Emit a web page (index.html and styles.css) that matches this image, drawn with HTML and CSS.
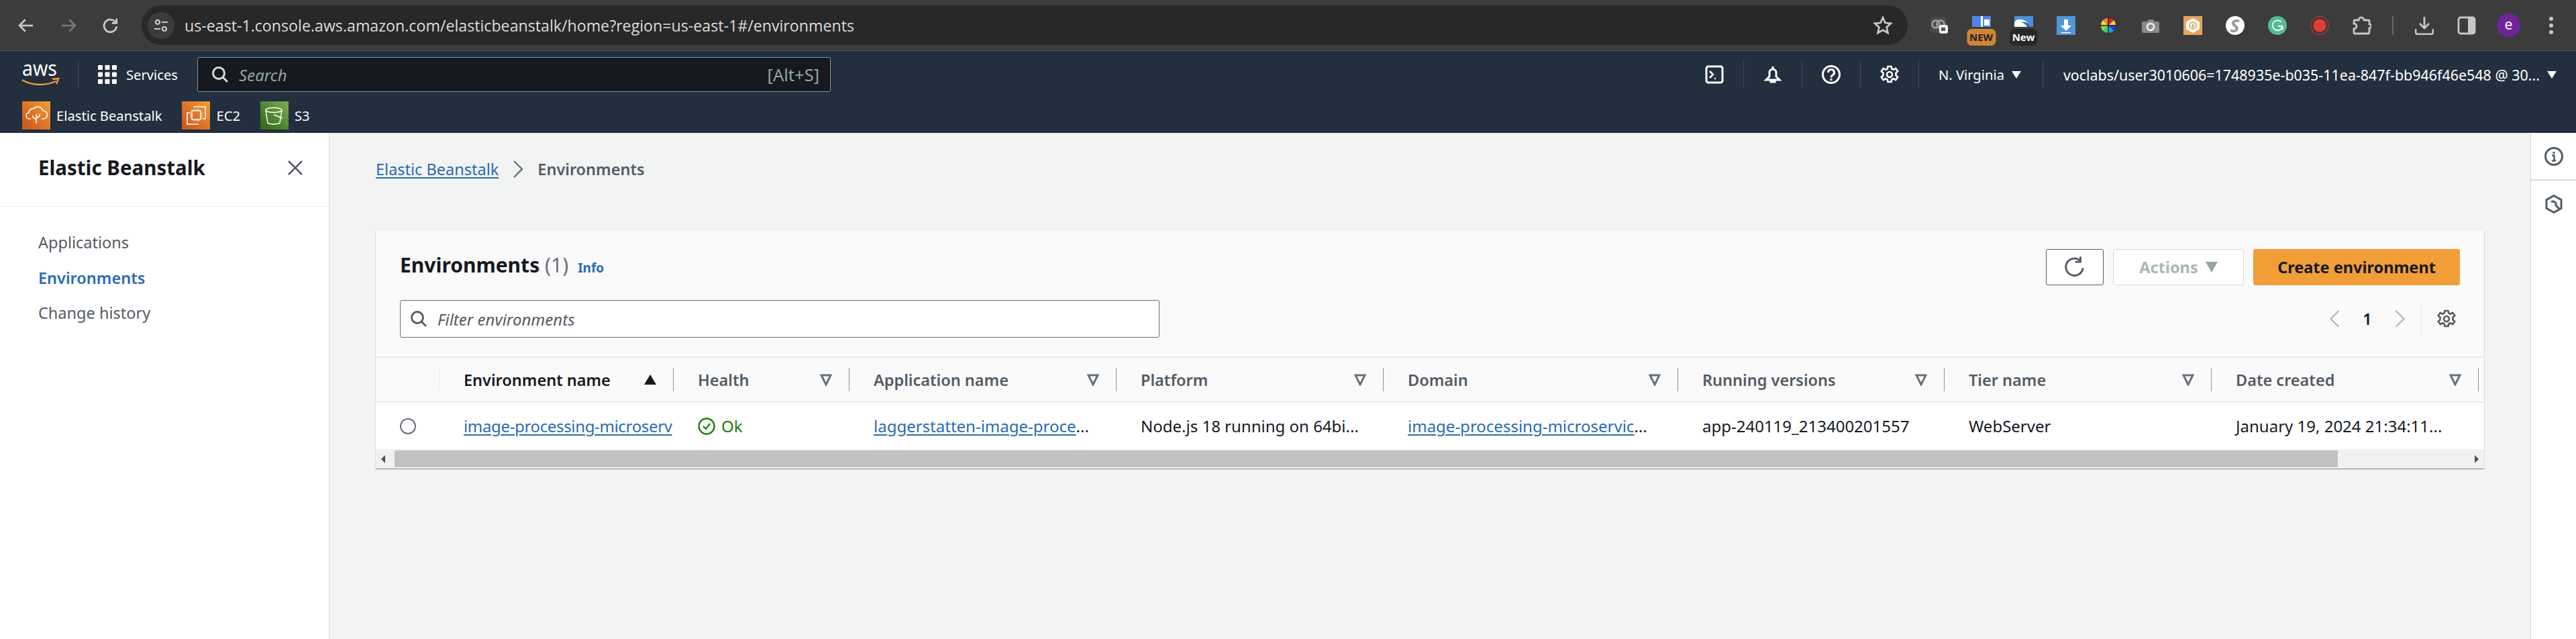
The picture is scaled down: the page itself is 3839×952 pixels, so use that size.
FILE: index.html
```html
<!DOCTYPE html>
<html lang="en">
  <head>
    <meta charset="UTF-8" />
    <title>Environments | Elastic Beanstalk</title>
    <link rel="stylesheet" href="styles.css">
  </head>
  <body>
    <!-- Browser toolbar -->
    <header class="browser">
      <div class="browser-btn">
        <svg class="ico" viewBox="0 0 24 24"><path d="M20 12H5M11 5l-7 7 7 7" class="line-light"/></svg>
      </div>
      <div class="browser-btn">
        <svg class="ico" viewBox="0 0 24 24"><path d="M4 12h15M13 5l7 7-7 7" class="line-dim"/></svg>
      </div>
      <div class="browser-btn">
        <svg class="ico" viewBox="0 0 24 24"><path d="M19 13a7.5 7.5 0 1 1-2.4-6.2L19 9M19 3.500V9h-5.500" class="line-light"/></svg>
      </div>
      <div class="omnibox">
        <span class="site-badge">
          <svg viewBox="0 0 24 24" width="24" height="24"><circle cx="7" cy="7" r="3" class="line-light"/><path d="M13 7h9M2 17h9" class="line-light"/><circle cx="17" cy="17" r="3" class="line-light"/></svg>
        </span>
        <span class="url">us-east-1.console.aws.amazon.com/elasticbeanstalk/home?region=us-east-1#/environments</span>
        <svg class="star" viewBox="0 0 24 24"><path d="M12 2.500l2.800 6.300 6.700.7-5 4.600 1.400 6.700-5.900-3.400-5.900 3.400 1.400-6.700-5-4.600 6.700-.7z" class="line-light"/></svg>
      </div>
      <div class="ext">
        <svg class="ext-ico" viewBox="0 0 28 28"><rect x="1" y="1" width="24" height="24" rx="5" fill="#4a4a4a"/><circle cx="9" cy="12" r="5.500" fill="none" stroke="#999" stroke-width="3"/><circle cx="16" cy="12" r="5.500" fill="none" stroke="#999" stroke-width="3"/><rect x="14" y="13" width="13" height="13" rx="3" fill="#eee"/><rect x="17" y="17" width="6" height="5" fill="#555"/></svg>
      </div>
      <div class="ext">
        <svg class="ext-ico" viewBox="0 0 28 28"><rect width="28" height="16" fill="#4f86e8"/><rect x="13" width="3" height="16" fill="#fff"/><rect x="18" y="5" width="8" height="9" fill="#fff"/></svg>
        <span class="ext-new orange">NEW</span>
      </div>
      <div class="ext">
        <svg class="ext-ico" viewBox="0 0 28 28"><rect width="28" height="16" fill="#4a90d9"/><path d="M0 16V9c4-7 18-6 24 7z" fill="#fff"/><path d="M10 9c6-2 12 1 14 7h-5c-2-4-5-6-9-7z" fill="#2f6fb5"/></svg>
        <span class="ext-new dark">New</span>
      </div>
      <div class="ext">
        <svg class="ext-ico" viewBox="0 0 28 28"><rect width="28" height="28" fill="#4f97d9"/><path d="M11 5h6v9h5l-8 8-8-8h5z" fill="#fff"/><rect x="7" y="24" width="14" height="1.500" fill="#fff"/></svg>
      </div>
      <div class="ext">
        <svg class="ext-ico" viewBox="0 0 28 28"><path d="M14 14V3a11 11 0 0 1 8 3z" fill="#e01b24"/><path d="M14 14l8-8a11 11 0 0 1 3 8z" fill="#f6d32d"/><path d="M14 14h11a11 11 0 0 1-3 8z" fill="#1c3fe0"/><path d="M14 14l8 8a11 11 0 0 1-8 3z" fill="#1aa3e8"/><path d="M14 14v11a11 11 0 0 1-8-3z" fill="#33d17a"/><path d="M14 14l-8 8a11 11 0 0 1-3-8z" fill="#9ad13a"/><path d="M14 14H3a11 11 0 0 1 3-8z" fill="#e8e03a"/><path d="M14 14L6 6a11 11 0 0 1 8-3z" fill="#f08a24"/><path d="M14 1v26M1 14h26" stroke="#222" stroke-width="1.500"/></svg>
      </div>
      <div class="ext">
        <svg class="ext-ico" viewBox="0 0 28 28"><path d="M3 8h6l2-3h7l2 3h5a2 2 0 0 1 2 2v13a2 2 0 0 1-2 2H3a2 2 0 0 1-2-2V10a2 2 0 0 1 2-2z" fill="#8a8a8a"/><circle cx="14" cy="16" r="5" fill="none" stroke="#e6e6e6" stroke-width="3"/></svg>
      </div>
      <div class="ext">
        <svg class="ext-ico" viewBox="0 0 28 28"><rect width="28" height="28" fill="#e9a15b"/><path d="M14 3l10 5.500v11L14 25 4 19.500v-11z" fill="#fff"/><circle cx="14" cy="14" r="5" fill="none" stroke="#e09a3a" stroke-width="1.500"/><path d="M14 11v5M12 14.500l2 2 2-2" fill="none" stroke="#e09a3a" stroke-width="1.500"/></svg>
      </div>
      <div class="ext">
        <svg class="ext-ico" viewBox="0 0 28 28"><circle cx="14" cy="14" r="14" fill="#fff"/></svg>
        <span class="ext-letter">S</span>
      </div>
      <div class="ext">
        <svg class="ext-ico" viewBox="0 0 28 28"><circle cx="14" cy="14" r="14" fill="#56bb93"/><path d="M20 9a7.500 7.500 0 1 0 1 8M15 15h6.500v5.500" fill="none" stroke="#fff" stroke-width="1.800"/></svg>
      </div>
      <div class="ext">
        <svg class="ext-ico" viewBox="0 0 28 28"><circle cx="14" cy="14" r="13.300" fill="none" stroke="#c8302b" stroke-width="1.200"/><circle cx="14" cy="14" r="9.500" fill="#e43d33"/></svg>
      </div>
      <div class="ext">
        <svg class="ext-ico" viewBox="0 0 28 28"><path d="M3 6h6a4 4 0 0 1 8 0h6a2 2 0 0 1 2 2v4a3 3 0 0 1 0 6v6a2 2 0 0 1-2 2H3a2 2 0 0 1-1-1v-6a3 3 0 0 0 0-8V7a2 2 0 0 1 1-1z" fill="none" stroke="#c7c7c7" stroke-width="2.800"/></svg>
      </div>
      <span class="browser-sep"></span>
      <div class="ext">
        <svg class="ext-ico" viewBox="0 0 28 28"><path d="M14 1v17M7 11l7 7 7-7M1 19v5a3 3 0 0 0 3 3h20a3 3 0 0 0 3-3v-5" fill="none" stroke="#c7c7c7" stroke-width="2.800"/></svg>
      </div>
      <div class="ext">
        <svg class="ext-ico" viewBox="0 0 28 28"><rect x="2" y="2" width="24" height="24" rx="3" fill="none" stroke="#c7c7c7" stroke-width="2.800"/><rect x="16" y="2" width="10" height="24" fill="#c7c7c7"/></svg>
      </div>
      <div class="ext"><span class="avatar">e</span></div>
      <div class="ext dots"><i></i><i></i><i></i></div>
    </header>

    <!-- AWS top navigation -->
    <nav class="topnav">
      <div class="nav-row">
        <div class="nav-left">
          <svg class="aws-logo" viewBox="0 0 54 38">
            <text x="0" y="21" textLength="52" lengthAdjust="spacingAndGlyphs" class="aws-text">aws</text>
            <path d="M0 27c14 9 36 9 50 2" fill="none" stroke="#ec9c35" stroke-width="2.500"/>
            <path d="M45 26l9-1-3 8" fill="none" stroke="#ec9c35" stroke-width="2.500"/>
          </svg>
          <span class="nav-div"></span>
          <svg class="grid-ico" viewBox="0 0 28 28">
            <rect width="7" height="7" rx="1"/><rect x="10.500" width="7" height="7" rx="1"/><rect x="21" width="7" height="7" rx="1"/>
            <rect y="10.500" width="7" height="7" rx="1"/><rect x="10.500" y="10.500" width="7" height="7" rx="1"/><rect x="21" y="10.500" width="7" height="7" rx="1"/>
            <rect y="21" width="7" height="7" rx="1"/><rect x="10.500" y="21" width="7" height="7" rx="1"/><rect x="21" y="21" width="7" height="7" rx="1"/>
          </svg>
          <span class="nav-label">Services</span>
          <div class="nav-search">
            <svg class="nav-search-ico" viewBox="0 0 26 26"><circle cx="11" cy="11" r="8.500" fill="none" stroke="#d5dbdb" stroke-width="3"/><path d="M17 17l7 7" stroke="#d5dbdb" stroke-width="3"/></svg>
            <span class="nav-search-text">Search</span>
            <span class="nav-search-key">[Alt+S]</span>
          </div>
        </div>
        <div class="nav-right">
          <span class="nav-tool">
            <svg class="nav-ico" viewBox="0 0 28 28"><rect x="2" y="2" width="24" height="24" rx="3" fill="none" stroke="#fff" stroke-width="3"/><path d="M7 9l5 5-5 5M14 20h2" fill="none" stroke="#fff" stroke-width="2.500"/></svg>
          </span>
          <span class="nav-tool">
            <svg class="nav-ico" viewBox="0 0 28 28"><path d="M14 2v3M9 17V11a5 5 0 0 1 10 0v6l5 5H4zM11 22a3 3 0 0 0 6 0v3h-6z" fill="none" stroke="#fff" stroke-width="3"/></svg>
          </span>
          <span class="nav-tool">
            <svg class="nav-ico" viewBox="0 0 28 28"><circle cx="14" cy="14" r="12.500" fill="none" stroke="#fff" stroke-width="3"/><path d="M9.500 11a4.500 4.500 0 1 1 6.500 4c-1.500.8-2 1.500-2 3.500" fill="none" stroke="#fff" stroke-width="3"/><rect x="12.500" y="20" width="3" height="3" fill="#fff"/></svg>
          </span>
          <span class="nav-tool">
            <svg class="nav-ico" viewBox="0 0 28 28"><use href="#gear" stroke="#fff"/></svg>
          </span>
          <span class="nav-region">N. Virginia<i class="caret"></i></span>
          <span class="nav-user">voclabs/user3010606=1748935e-b035-11ea-847f-bb946f46e548 @ 30...<i class="caret"></i></span>
        </div>
      </div>
      <div class="nav-fav">
        <span class="fav-item">
          <svg class="fav-ico" viewBox="0 0 42 42">
            <defs>
              <linearGradient id="orangeGrad" x1="0" y1="1" x2="1" y2="0"><stop offset="0" stop-color="#c8511b"/><stop offset="1" stop-color="#f39e36"/></linearGradient>
              <linearGradient id="greenGrad" x1="0" y1="1" x2="1" y2="0"><stop offset="0" stop-color="#2f6317"/><stop offset="1" stop-color="#7cae52"/></linearGradient>
            </defs>
            <rect width="42" height="42" fill="url(#orangeGrad)"/>
            <path d="M13 26h-2a4.500 4.500 0 0 1-1-9 6 6 0 0 1 7-6 8 8 0 0 1 14 3 6 6 0 0 1 1 12h-3M21 33V19M21 27l-5-3v-3M21 25l5-3v-3" fill="none" stroke="#fff" stroke-width="1.500"/>
          </svg>
          Elastic Beanstalk
        </span>
        <span class="fav-item">
          <svg class="fav-ico" viewBox="0 0 42 42">
            <rect width="42" height="42" fill="url(#orangeGrad)"/>
            <path d="M17 8h18v18h-4M25 34H8V17h4" fill="none" stroke="#fff" stroke-width="1.500"/>
            <rect x="15" y="14" width="13" height="13" fill="none" stroke="#fff" stroke-width="1.500"/>
            <path d="M18 11v3M22 11v3M25 11v3M18 27v3M22 27v3M25 27v3M12 18h3M12 21h3M12 24h3M28 18h3M28 21h3M28 24h3" stroke="#fff" stroke-width="1"/>
          </svg>
          EC2
        </span>
        <span class="fav-item">
          <svg class="fav-ico" viewBox="0 0 42 42">
            <rect width="42" height="42" fill="url(#greenGrad)"/>
            <ellipse cx="20" cy="13" rx="12" ry="3.500" fill="none" stroke="#fff" stroke-width="1.500"/>
            <path d="M8 13l3 19c2 2.500 16 2.500 18 0l3-19M20 20l13 5" fill="none" stroke="#fff" stroke-width="1.500"/>
          </svg>
          S3
        </span>
      </div>
    </nav>

    <!-- Shared icons -->
    <svg class="defs" width="0" height="0">
      <defs>
        <g id="gear" fill="none" stroke-width="2.600">
          <path d="M11.500 2h5l.8 3.500 2.700 1.200 3.200-1.800 3 4.200-2.700 2.500v3.800l2.700 2.500-3 4.200-3.200-1.800-2.700 1.200-.8 3.500h-5l-.8-3.500-2.700-1.200-3.200 1.800-3-4.200 2.700-2.500v-3.800L1.800 9.100l3-4.200L8 6.700l2.700-1.200z"/>
          <circle cx="14" cy="14" r="4"/>
        </g>
        <path id="sort" d="M2 2h14L9 16z" fill="none" stroke="#687078" stroke-width="3"/>
      </defs>
    </svg>

    <div class="layout">
      <!-- Left navigation -->
      <aside class="sidenav">
        <div class="sidenav-head">
          <span class="sidenav-title">Elastic Beanstalk</span>
          <svg class="close" viewBox="0 0 24 24"><path d="M2 2l20 20M22 2L2 22" stroke="#545b64" stroke-width="2.600"/></svg>
        </div>
        <ul class="sidenav-list">
          <li>Applications</li>
          <li class="current">Environments</li>
          <li>Change history</li>
        </ul>
      </aside>

      <main class="content">
        <div class="crumbs">
          <a class="link" href="#">Elastic Beanstalk</a>
          <svg class="crumb-sep" viewBox="0 0 16 26"><path d="M2 1l12 12L2 25" fill="none" stroke="#687078" stroke-width="2.400"/></svg>
          <span class="crumb-now">Environments</span>
        </div>

        <section class="card">
          <div class="card-top">
            <div class="card-title">
              <h1>Environments <span class="count">(1)</span></h1>
              <a class="info" href="#">Info</a>
            </div>
            <div class="card-actions">
              <button class="btn btn-icon">
                <svg viewBox="0 0 28 28" width="34" height="34"><path d="M24 15a10.500 10.500 0 1 1-4-9.500M21 1v6.500h-6.500" fill="none" stroke="#545b64" stroke-width="2.400"/></svg>
              </button>
              <button class="btn btn-off">Actions<i class="caret caret-off"></i></button>
              <button class="btn btn-primary">Create environment</button>
            </div>
          </div>
          <div class="card-tools">
            <div class="filter">
              <svg class="filter-ico" viewBox="0 0 26 26"><circle cx="11" cy="11" r="8.500" fill="none" stroke="#545b64" stroke-width="2.800"/><path d="M17 17l7 7" stroke="#545b64" stroke-width="2.800"/></svg>
              <span>Filter environments</span>
            </div>
            <div class="pager">
              <svg class="pager-arrow" viewBox="0 0 16 28"><path d="M14 2L2 14l12 12" fill="none" stroke="#aab7b8" stroke-width="2.200"/></svg>
              <span class="pager-num">1</span>
              <svg class="pager-arrow" viewBox="0 0 16 28"><path d="M2 2l12 12L2 26" fill="none" stroke="#aab7b8" stroke-width="2.200"/></svg>
              <span class="pager-div"></span>
              <svg class="pager-gear" viewBox="0 0 28 28"><use href="#gear" stroke="#545b64"/></svg>
            </div>
          </div>

          <div class="table">
            <div class="thead">
              <div class="th th-blank"></div>
              <div class="th th-sorted">Environment name<i class="sort-up"></i></div>
              <div class="th">Health<svg class="sort" viewBox="0 0 18 18"><use href="#sort"/></svg></div>
              <div class="th">Application name<svg class="sort" viewBox="0 0 18 18"><use href="#sort"/></svg></div>
              <div class="th">Platform<svg class="sort" viewBox="0 0 18 18"><use href="#sort"/></svg></div>
              <div class="th">Domain<svg class="sort" viewBox="0 0 18 18"><use href="#sort"/></svg></div>
              <div class="th">Running versions<svg class="sort" viewBox="0 0 18 18"><use href="#sort"/></svg></div>
              <div class="th">Tier name<svg class="sort" viewBox="0 0 18 18"><use href="#sort"/></svg></div>
              <div class="th">Date created<svg class="sort" viewBox="0 0 18 18"><use href="#sort"/></svg></div>
            </div>
            <div class="tbody">
              <div class="td td-radio"><span class="radio"></span></div>
              <div class="td td-tight"><a class="link" href="#">image-processing-microserv</a></div>
              <div class="td td-health">
                <svg class="ok-ico" viewBox="0 0 26 26"><circle cx="13" cy="13" r="11.500" fill="none" stroke="#1d8102" stroke-width="2.400"/><path d="M8 13l4 4 6-8" fill="none" stroke="#1d8102" stroke-width="2.400"/></svg>
                <span class="ok">Ok</span>
              </div>
              <div class="td"><a class="link" href="#">laggerstatten-image-proce</a>...</div>
              <div class="td">Node.js 18 running on 64bi...</div>
              <div class="td"><a class="link" href="#">image-processing-microservic</a>...</div>
              <div class="td">app-240119_213400201557</div>
              <div class="td">WebServer</div>
              <div class="td">January 19, 2024 21:34:11...</div>
            </div>
            <div class="hscroll">
              <i class="arrow-left"></i>
              <div class="hscroll-track"><div class="hscroll-thumb"></div></div>
              <i class="arrow-right"></i>
            </div>
          </div>
        </section>
      </main>

      <!-- Right tools rail -->
      <aside class="rail">
        <div class="rail-cell rail-top">
          <svg class="rail-ico" viewBox="0 0 28 28"><circle cx="14" cy="14" r="12.500" fill="none" stroke="#545b64" stroke-width="3"/><rect x="12.500" y="7" width="3" height="3" fill="#545b64"/><path d="M11 12.500h3.500V20M11 20.500h6" fill="none" stroke="#545b64" stroke-width="2.400"/></svg>
        </div>
        <div class="rail-cell">
          <svg class="rail-ico" viewBox="0 0 28 28"><path d="M14 1.500l11 6.200v12.600L14 26.500 3 20.300V7.700z" fill="none" stroke="#545b64" stroke-width="3"/><path d="M10 11a4.500 4.500 0 0 1 7 5l5 5" fill="none" stroke="#545b64" stroke-width="3"/></svg>
        </div>
      </aside>
    </div>
  </body>
</html>
```

FILE: styles.css
```css
* {
  box-sizing: border-box;
}
html,
body {
  height: 100%;
}
body {
  margin: 0;
  font-family: "Noto Sans", "Open Sans", Arial, sans-serif;
  font-size: 23.500px;
  color: #16191f;
  background: #f2f3f3;
  display: flex;
  flex-direction: column;
  overflow: hidden;
}
i {
  display: block;
  font-style: normal;
}
a {
  color: inherit;
}
.defs {
  position: absolute;
}

/* Browser toolbar */
.browser {
  height: 76px;
  flex: none;
  display: flex;
  align-items: center;
  padding-left: 7px;
  background: #3c3c3c;
  border-bottom: 1px solid #555;
}
.browser-btn {
  width: 63px;
  display: flex;
  justify-content: center;
}
.ico {
  width: 30px;
  height: 30px;
}
.line-light,
.line-dim {
  fill: none;
  stroke: #c7c7c7;
  stroke-width: 2.200;
}
.line-dim {
  stroke: #777;
}
.omnibox {
  width: 2632px;
  height: 59px;
  margin-left: 15px;
  margin-right: 15px;
  padding: 0 22px 0 9px;
  border-radius: 30px;
  background: #282828;
  display: flex;
  align-items: center;
}
.site-badge {
  width: 40px;
  height: 40px;
  border-radius: 50%;
  background: #3c3c3c;
  display: flex;
  align-items: center;
  justify-content: center;
}
.url {
  margin-left: 15px;
  flex: 1;
  font-size: 23.200px;
  color: #dcdcdc;
  font-family: "Open Sans", "Noto Sans", sans-serif;
}
.star {
  width: 30px;
  height: 30px;
}
.ext {
  width: 63px;
  height: 60px;
  flex: none;
  position: relative;
  display: flex;
  align-items: center;
  justify-content: center;
}
.ext-ico {
  width: 28px;
  height: 28px;
}
.ext-new {
  position: absolute;
  top: 35px;
  left: 50%;
  transform: translateX(-50%);
  height: 25px;
  padding: 0 4px;
  border-radius: 7px;
  font-size: 15px;
  font-weight: 700;
  line-height: 25px;
}
.ext-new.orange {
  background: #cf8435;
  color: #222;
}
.ext-new.dark {
  background: #282828;
  color: #fff;
}
.ext-letter {
  position: absolute;
  top: 14px;
  left: 0;
  width: 100%;
  text-align: center;
  font-size: 26px;
  line-height: 32px;
  font-weight: 700;
  font-style: italic;
  color: #999;
}
.browser-sep {
  width: 30px;
  height: 28px;
  flex: none;
  background: linear-gradient(#666, #666) center / 2px 100% no-repeat;
}
.avatar {
  width: 35px;
  height: 35px;
  border-radius: 50%;
  background: #6f2597;
  color: #fff;
  font-size: 21px;
  line-height: 33px;
  text-align: center;
}
.dots {
  flex-direction: column;
  gap: 4px;
}
.dots i {
  width: 6px;
  height: 6px;
  border-radius: 50%;
  background: #c7c7c7;
}

/* AWS nav */
.topnav {
  height: 122px;
  flex: none;
  background: #232f3e;
  color: #fff;
  font-size: 20.200px;
}
.nav-row {
  height: 75px;
  padding: 9px 29px 14px 33px;
  display: flex;
  align-items: center;
  justify-content: space-between;
}
.nav-left,
.nav-right {
  display: flex;
  align-items: center;
}
.aws-logo {
  width: 54px;
  height: 38px;
  overflow: visible;
}
.aws-text {
  font-size: 31px;
  fill: #fff;
}
.nav-div {
  width: 1px;
  height: 40px;
  margin: 0 29px;
  background: #414d5c;
}
.grid-ico {
  width: 28px;
  height: 28px;
  fill: #fff;
}
.nav-label {
  margin-left: 14px;
}
.nav-search {
  width: 944px;
  height: 52px;
  margin-left: 29px;
  padding: 0 16px 0 20px;
  display: flex;
  align-items: center;
  background: #16191f;
  border: 1px solid #879596;
  border-radius: 3px;
  color: #95a5a6;
  font-size: 24px;
}
.nav-search-ico {
  width: 26px;
  height: 26px;
}
.nav-search-text {
  flex: 1;
  margin-left: 15px;
  font-style: italic;
}
.nav-search-key {
  font-size: 25.500px;
}
.nav-tool {
  width: 87px;
  height: 40px;
  display: flex;
  align-items: center;
  justify-content: center;
  border-right: 1px solid #414d5c;
}
.nav-ico {
  width: 28px;
  height: 28px;
}
.nav-region {
  width: 185px;
  height: 40px;
  padding-left: 29px;
  display: flex;
  align-items: center;
  border-right: 1px solid #414d5c;
}
.nav-user {
  padding-left: 30px;
  display: flex;
  align-items: center;
  font-size: 21.450px;
}
.caret {
  width: 0;
  height: 0;
  margin-left: 11px;
  border-left: 7px solid transparent;
  border-right: 7px solid transparent;
  border-top: 11px solid #fff;
}
.nav-fav {
  display: flex;
  align-items: center;
  gap: 30px;
  padding-left: 33px;
}
.fav-item {
  display: flex;
  align-items: center;
  gap: 9px;
}
.fav-ico {
  width: 42px;
  height: 42px;
}

/* Page layout */
.layout {
  flex: 1;
  min-height: 0;
  display: flex;
}
.sidenav {
  width: 491px;
  flex: none;
  background: #fff;
  border-right: 1px solid #d5dbdb;
}
.sidenav-head {
  height: 110px;
  padding: 0 38px 6px 57px;
  display: flex;
  align-items: center;
  justify-content: space-between;
  border-bottom: 1px solid #eaeded;
}
.sidenav-title {
  font-size: 29.500px;
  font-weight: 700;
}
.close {
  width: 24px;
  height: 24px;
}
.sidenav-list {
  list-style: none;
  margin: 27px 0 0;
  padding: 0 0 0 57px;
  color: #545b64;
}
.sidenav-list li {
  height: 52.500px;
  line-height: 52.500px;
}
.sidenav-list .current {
  color: #2a6bb3;
  font-weight: 600;
}

.content {
  flex: 1;
  min-width: 0;
  padding: 33px 69px 0;
}
.crumbs {
  height: 42px;
  display: flex;
  align-items: center;
  gap: 21px;
}
.link {
  color: #2a6bb3;
  text-decoration: underline;
  text-underline-offset: 3px;
}
.crumb-sep {
  width: 16px;
  height: 26px;
}
.crumb-now {
  color: #545b64;
  font-weight: 600;
}

/* Card */
.card {
  margin-top: 70px;
  background: #fafafa;
  box-shadow: 0 1px 1px #879596, 0 0 1px #d5dbdb;
}
.card-top {
  height: 104px;
  padding: 28px 36px 0;
  display: flex;
  justify-content: space-between;
}
.card-title {
  display: flex;
  align-items: baseline;
  gap: 14px;
  padding-top: 3px;
}
.card-title h1 {
  margin: 0;
  font-size: 30px;
  font-weight: 700;
}
.count {
  font-weight: 400;
  color: #687078;
}
.info {
  font-size: 19px;
  font-weight: 700;
  color: #2a6bb3;
  text-decoration: none;
}
.card-actions {
  display: flex;
  gap: 14px;
  height: 54px;
}
.btn {
  height: 54px;
  font: inherit;
  font-weight: 700;
  border-radius: 3px;
  display: flex;
  align-items: center;
  justify-content: center;
}
.btn-icon {
  width: 86px;
  background: #fff;
  border: 1px solid #545b64;
}
.btn-off {
  width: 195px;
  background: #fff;
  border: 1px solid #d5dbdb;
  color: #aab7b8;
}
.caret-off {
  border-top-color: #95a5a6;
  border-left-width: 9px;
  border-right-width: 9px;
  border-top-width: 16px;
}
.btn-primary {
  width: 308px;
  background: #f29e38;
  border: 0;
  color: #16191f;
}
.card-tools {
  height: 84px;
  padding: 0 42px 28px 36px;
  display: flex;
  align-items: center;
  justify-content: space-between;
}
.filter {
  width: 1132px;
  height: 56px;
  padding: 0 14px;
  display: flex;
  align-items: center;
  gap: 15px;
  background: #fff;
  border: 1px solid #687078;
  border-radius: 3px;
  color: #545b64;
  font-style: italic;
  font-size: 24px;
}
.filter-ico {
  width: 26px;
  height: 26px;
}
.pager {
  display: flex;
  align-items: center;
}
.pager-arrow {
  width: 17px;
  height: 28px;
}
.pager-num {
  width: 80px;
  text-align: center;
  font-weight: 600;
}
.pager-div {
  width: 1px;
  height: 54px;
  margin: 0 23px;
  background: #eaeded;
}
.pager-gear {
  width: 28px;
  height: 28px;
}

/* Table */
.thead,
.tbody {
  display: grid;
  grid-template-columns: 95px 349px 262px 398px 398px 439px 397px 398px 398px;
}
.thead {
  height: 69px;
  align-items: center;
  border-top: 2px solid #eaeded;
  border-bottom: 2px solid #eaeded;
  color: #545b64;
  font-weight: 600;
}
.th {
  height: 35px;
  padding: 0 25px 0 36px;
  display: flex;
  align-items: center;
  justify-content: space-between;
  border-right: 1px solid #879596;
}
.th-blank {
  border-right-color: #eaeded;
}
.th-sorted {
  color: #16191f;
}
.sort {
  width: 18px;
  height: 18px;
}
.sort-up {
  width: 0;
  height: 0;
  border-left: 9px solid transparent;
  border-right: 9px solid transparent;
  border-bottom: 15px solid #16191f;
}
.tbody {
  height: 69px;
  align-items: center;
  background: #fff;
  font-size: 24px;
}
.td {
  padding: 0 0 0 36px;
  overflow: hidden;
  white-space: nowrap;
}
.td-tight {
  letter-spacing: -0.350px;
}
.td-radio {
  display: flex;
}
.radio {
  width: 24px;
  height: 24px;
  border-radius: 50%;
  background: #fff;
  border: 2px solid #687078;
}
.td-health {
  display: flex;
  align-items: center;
  gap: 9px;
}
.ok-ico {
  width: 26px;
  height: 26px;
}
.ok {
  color: #1d8102;
}
.hscroll {
  height: 29px;
  padding: 2px 8px;
  display: flex;
  align-items: center;
  background: #f1f1f1;
}
.arrow-left,
.arrow-right {
  width: 0;
  height: 0;
  border-top: 6px solid transparent;
  border-bottom: 6px solid transparent;
}
.arrow-left {
  border-right: 6px solid #505050;
}
.arrow-right {
  border-left: 6px solid #505050;
}
.hscroll-track {
  flex: 1;
  height: 25px;
  margin: 0 9px 0 14px;
}
.hscroll-thumb {
  width: 2896px;
  height: 100%;
  background: #c1c1c1;
}

/* Right rail */
.rail {
  width: 68px;
  flex: none;
  background: #fff;
  border-left: 1px solid #d5dbdb;
}
.rail-cell {
  height: 70px;
  display: flex;
  align-items: center;
  justify-content: center;
}
.rail-top {
  height: 71px;
  border-bottom: 2px solid #d5dbdb;
}
.rail-ico {
  width: 28px;
  height: 28px;
}
```
